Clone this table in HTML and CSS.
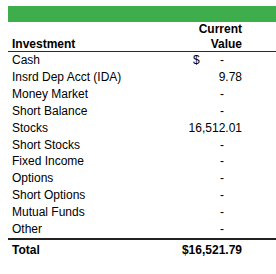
FILE: index.html
```html
<!DOCTYPE html>
<html>
<head>
<meta charset="utf-8">
<link rel="stylesheet" href="styles.css">
</head>
<body>
<div class="sheet">
  <div class="banner"></div>
  <div class="row head">
    <div class="label">Investment</div>
    <div class="value">Current<br>Value</div>
  </div>
  <div class="body">
    <div class="row"><div class="label">Cash</div><div class="value split"><span>$</span><span class="dash">-</span></div></div>
    <div class="row"><div class="label">Insrd Dep Acct (IDA)</div><div class="value">9.78</div></div>
    <div class="row"><div class="label">Money Market</div><div class="value"><span class="dash">-</span></div></div>
    <div class="row"><div class="label">Short Balance</div><div class="value"><span class="dash">-</span></div></div>
    <div class="row"><div class="label">Stocks</div><div class="value">16,512.01</div></div>
    <div class="row"><div class="label">Short Stocks</div><div class="value"><span class="dash">-</span></div></div>
    <div class="row"><div class="label">Fixed Income</div><div class="value"><span class="dash">-</span></div></div>
    <div class="row"><div class="label">Options</div><div class="value"><span class="dash">-</span></div></div>
    <div class="row"><div class="label">Short Options</div><div class="value"><span class="dash">-</span></div></div>
    <div class="row"><div class="label">Mutual Funds</div><div class="value"><span class="dash">-</span></div></div>
    <div class="row"><div class="label">Other</div><div class="value"><span class="dash">-</span></div></div>
  </div>
  <div class="row total">
    <div class="label">Total</div>
    <div class="value">$16,521.79</div>
  </div>
</div>
</body>
</html>
```

FILE: styles.css
```css
html, body {
  margin: 0;
  padding: 0;
  background: #ffffff;
}
body {
  font-family: "Liberation Sans", Arial, sans-serif;
  font-size: 12px;
  color: #000000;
}
.sheet {
  margin-left: 8px;
  padding-top: 6px;
}
.banner {
  height: 16px;
  background: #3dae4b;
}
.row {
  display: grid;
  grid-template-columns: 1fr auto;
  padding-right: 34px;
  line-height: 16.9px;
  white-space: nowrap;
}
.label {
  padding-left: 4px;
}
.value {
  min-width: 49px;
  text-align: right;
}
.split {
  display: flex;
  justify-content: space-between;
}
.dash {
  margin-right: 18px;
}
.head {
  font-weight: bold;
  line-height: 14.5px;
  border-bottom: 1px solid #2a2a2a;
}
.head .label {
  align-self: end;
}
.total {
  font-weight: bold;
  line-height: 17px;
  padding-top: 2px;
  border-top: 2px solid #222222;
}
```
